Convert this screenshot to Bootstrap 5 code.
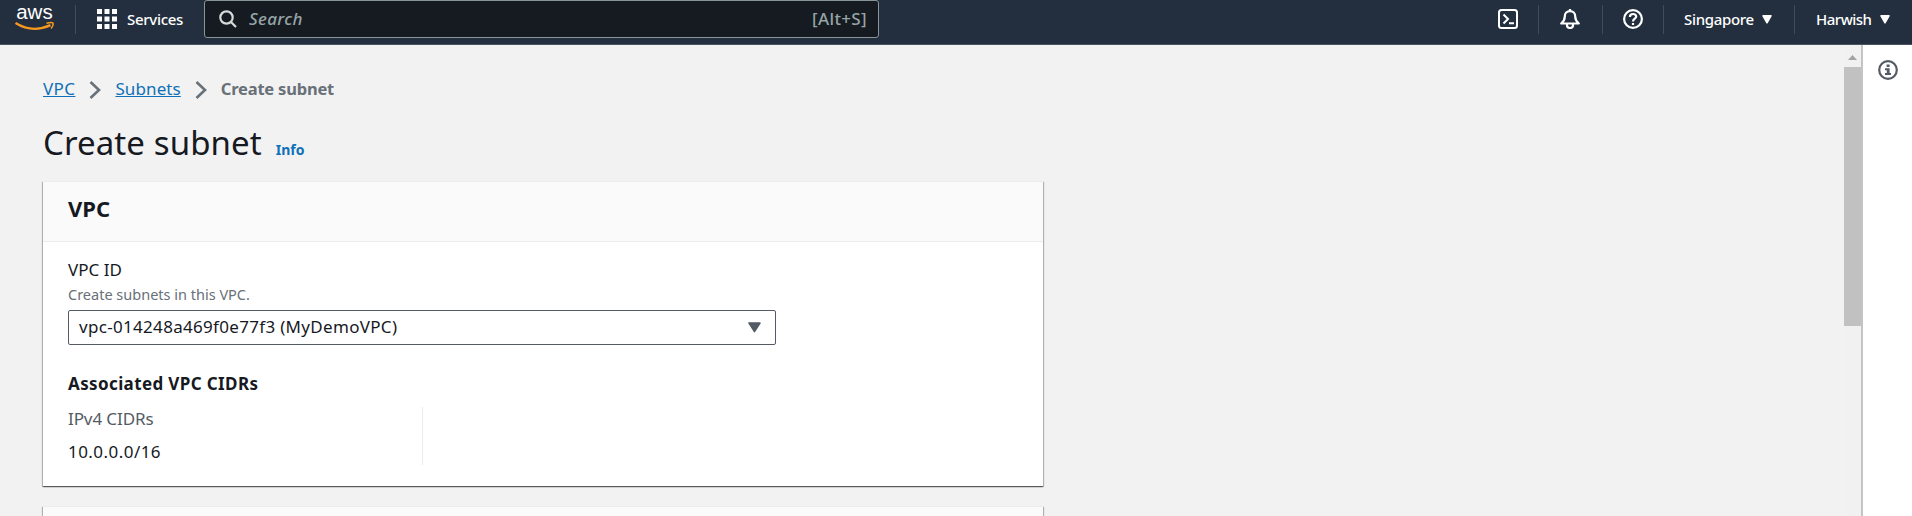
<!DOCTYPE html>
<html lang="en">
<head>
<meta charset="utf-8">
<title>Create subnet</title>
<link href="https://cdn.jsdelivr.net/npm/bootstrap@5.3.0/dist/css/bootstrap.min.css" rel="stylesheet">
<style>
body{height:516px;overflow:hidden;background:#f2f2f2;color:#16191f;font-family:"Noto Sans","Open Sans",sans-serif;font-size:17px;line-height:24px;white-space:nowrap}
svg{display:block;flex-shrink:0}
.topbar{height:45px;background:#232f3e;border-bottom:1px solid #4a5460;color:#fff;font-size:15px;font-weight:500;letter-spacing:-.3px}
.topbar .strip{height:38px}
.brand{width:75px;height:38px;padding-left:15px}
.services{width:129px;height:29px;border-left:1px solid #414d5c;padding-left:21px;gap:10px}
.search-box{width:675px;height:38px;background:#161a21;border:1px solid #879596;border-radius:3px;color:#95a5a6;padding:0 11px 0 14px;font-size:17px;letter-spacing:.35px}
.search-box em{margin-left:12px}
.tool{height:29px;border-left:1px solid #414d5c}
.tool:first-child{border-left:0}
.tool.cloudshell{width:60px}
.tool.alerts{width:64px;padding-right:1px}
.tool.help{width:61px}
.tool.region{width:131px;padding-left:20px;gap:8px;letter-spacing:-.33px}
.tool.account{width:118px;padding-left:21px;gap:8px;letter-spacing:-.5px}
.main-pane{padding:32px 0 0 43px}
.link-aws{color:#0f70b7}
.crumbs .link-aws{letter-spacing:.1px}
.crumbs .link-aws:first-child{letter-spacing:.4px}
.crumbs .chev{margin:2px 14px 0 14px}
.crumb-now{color:#687078;font-weight:700;font-size:16.5px;letter-spacing:-.2px}
h1{font-size:33px;line-height:42px;font-weight:400;letter-spacing:.1px}
.title-row{margin-top:21px}
.info-link{font-size:14px;font-weight:700;margin-left:14px}
.panel{width:1000px;background:#fff;border-top:1px solid #eaeded;box-shadow:0 1px 1px rgba(0,0,0,.4),1px 1px 1px rgba(0,0,0,.22),-1px 1px 1px rgba(0,0,0,.22);margin-top:20px}
.title-row + .panel{margin-top:17px}
.panel-head{height:60px;background:#fafafa;border-bottom:1px solid #eaeded;padding:12px 25px 0}
.panel-head h2{font-size:22px;line-height:28px;font-weight:700}
.panel-main{height:244px;padding:16px 25px 0}
.hint{font-size:14.5px;line-height:20px;color:#687078;margin:2px 0 6px}
.select-box{width:708px;height:35px;border:1px solid #545b64;border-radius:2px;padding:0 14px 1px 10px;letter-spacing:.31px}
.cidr-title{letter-spacing:.38px;margin-top:27px}
.cidr-cell{width:355px;height:58px;border-right:1px solid #eaeded;margin-top:13px}
.cidr-cell .key{color:#545b64;margin-top:-2px;letter-spacing:-.1px}
.cidr-cell .value{margin-top:9px;letter-spacing:.45px}
.rail{width:51px;background:#fff;border-left:2px solid #c4c4c4;padding:15px 0 0 15px}
.scroller{width:17px;background:#f1f1f1}
.scroller svg{margin:10px 0 7px 4px}
.thumb{height:259px;background:#c1c1c1}
</style>
</head>
<body class="d-flex flex-column">
<header class="topbar flex-shrink-0">
  <div class="strip d-flex align-items-center">
    <div class="brand d-flex">
      <svg width="40" height="38" viewBox="0 0 40 38"><text x="1.200" y="19" font-family="Liberation Sans, sans-serif" font-size="20.500" fill="#fff" letter-spacing="0">aws</text><path d="M.5 23Q17 33.500 35.500 25.200" fill="none" stroke="#f7981f" stroke-width="2.400"/><path d="M31.500 23.300Q36.500 21.700 38 23Q38.600 25.500 36 28.600" fill="none" stroke="#f7981f" stroke-width="1.500"/></svg>
    </div>
    <div class="services d-flex align-items-center">
      <svg width="20" height="20" viewBox="0 0 20 20" fill="#fff"><path d="M0 0h5v5H0zM7.500 0h5v5h-5zM15 0h5v5h-5zM0 7.500h5v5H0zM7.500 7.500h5v5h-5zM15 7.500h5v5h-5zM0 15h5v5H0zM7.500 15h5v5h-5zM15 15h5v5h-5z"/></svg>
      <span>Services</span>
    </div>
    <div class="search-box d-flex align-items-center">
      <svg width="18" height="18" viewBox="0 0 18 18" fill="none" stroke="#d5dbdb" stroke-width="2.200"><circle cx="7.500" cy="7.500" r="6.200"/><path d="M12 12l5 5"/></svg>
      <em>Search</em><span class="ms-auto">[Alt+S]</span>
    </div>
    <div class="ms-auto d-flex">
      <div class="tool cloudshell d-flex align-items-center justify-content-center">
        <svg width="20" height="20" viewBox="0 0 20 20" fill="none" stroke="#fff" stroke-width="2"><rect x="1" y="1" width="18" height="18" rx="2.500"/><path d="M5.500 5.500L10 10l-4.500 4.500M11 14.200h5"/></svg>
      </div>
      <div class="tool alerts d-flex align-items-center justify-content-center">
        <svg width="20" height="20" viewBox="0 0 20 20" fill="none" stroke="#fff" stroke-width="2.200" stroke-linejoin="round"><path d="M10 0v2M1.200 14.500h17.600c-2.300-2-3.600-3.500-3.600-7C15.200 4.300 13 2.200 10 2.200S4.800 4.300 4.800 7.500c0 3.500-1.300 5-3.600 7zM7 15v1.200a3 2.800 0 0 0 6 0V15"/></svg>
      </div>
      <div class="tool help d-flex align-items-center justify-content-center">
        <svg width="20" height="20" viewBox="0 0 20 20" fill="none" stroke="#fff" stroke-width="2.200"><circle cx="10" cy="10" r="8.900"/><path d="M6.900 8c0-4 6.300-3.900 6.300-.4C13.200 9.800 10 9.700 10 12.600M10 14v2"/></svg>
      </div>
      <div class="tool region d-flex align-items-center"><span>Singapore</span>
        <svg width="10" height="9" viewBox="0 0 10 9"><path d="M1 .8h8L5 7.800z" fill="#fff" stroke="#fff" stroke-width="1.500" stroke-linejoin="round"/></svg>
      </div>
      <div class="tool account d-flex align-items-center"><span>Harwish</span>
        <svg width="10" height="9" viewBox="0 0 10 9"><path d="M1 .8h8L5 7.800z" fill="#fff" stroke="#fff" stroke-width="1.500" stroke-linejoin="round"/></svg>
      </div>
    </div>
  </div>
</header>
<div class="d-flex flex-grow-1 overflow-hidden">
  <main class="main-pane flex-grow-1">
    <nav class="crumbs d-flex align-items-center">
      <a class="link-aws" href="#">VPC</a>
      <svg class="chev" width="12" height="18" viewBox="0 0 12 18" fill="none" stroke="#687078" stroke-width="2.600"><path d="M1.500 1l8.500 8-8.500 8"/></svg>
      <a class="link-aws" href="#">Subnets</a>
      <svg class="chev" width="12" height="18" viewBox="0 0 12 18" fill="none" stroke="#687078" stroke-width="2.600"><path d="M1.500 1l8.500 8-8.500 8"/></svg>
      <span class="crumb-now">Create subnet</span>
    </nav>
    <div class="title-row d-flex align-items-baseline">
      <h1 class="mb-0">Create subnet</h1>
      <a class="info-link link-aws text-decoration-none" href="#">Info</a>
    </div>
    <section class="panel">
      <div class="panel-head"><h2 class="mb-0">VPC</h2></div>
      <div class="panel-main">
        <div>VPC ID</div>
        <div class="hint">Create subnets in this VPC.</div>
        <div class="select-box d-flex align-items-center justify-content-between">
          <span>vpc-014248a469f0e77f3 (MyDemoVPC)</span>
          <svg width="13" height="11" viewBox="0 0 13 11"><path d="M1 1h11L6.500 9.700z" fill="#545b64" stroke="#545b64" stroke-width="1.500" stroke-linejoin="round"/></svg>
        </div>
        <div class="cidr-title fw-bold">Associated VPC CIDRs</div>
        <div class="cidr-cell">
          <div class="key">IPv4 CIDRs</div>
          <div class="value">10.0.0.0/16</div>
        </div>
      </div>
    </section>
    <section class="panel"><div class="panel-head"></div></section>
  </main>
  <div class="scroller flex-shrink-0">
    <svg width="9" height="5" viewBox="0 0 9 5"><path d="M0 5L4.500 0 9 5z" fill="#a3a3a3"/></svg>
    <div class="thumb"></div>
  </div>
  <aside class="rail flex-shrink-0">
    <svg width="20" height="20" viewBox="0 0 20 20"><circle cx="10" cy="10" r="8.800" fill="none" stroke="#545b64" stroke-width="2.200"/><path d="M8.600 4.500h3v2.500h-3zM7 8.300h4.600v4.700H13v2H7v-2h1.800v-2.700H7z" fill="#545b64"/></svg>
  </aside>
</div>
<script src="https://cdn.jsdelivr.net/npm/bootstrap@5.3.0/dist/js/bootstrap.bundle.min.js"></script>
</body>
</html>
